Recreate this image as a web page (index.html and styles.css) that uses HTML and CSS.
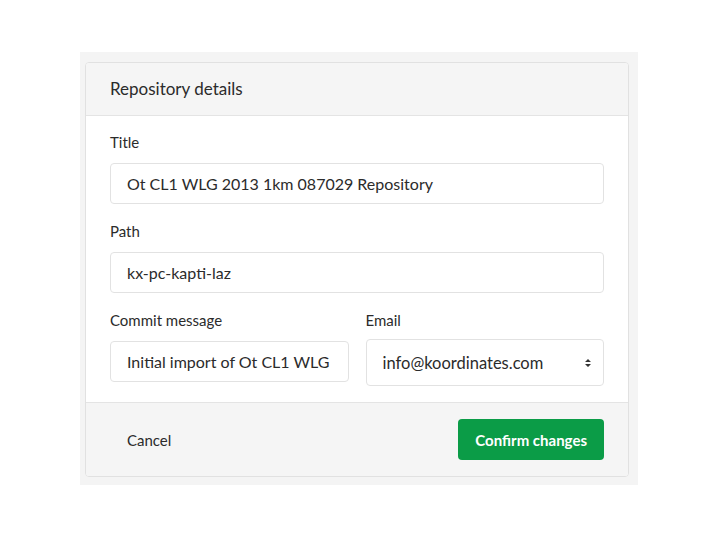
FILE: index.html
```html
<!DOCTYPE html>
<html lang="en">
<head>
    <meta charset="UTF-8">
    <title>Repository details</title>
    <link rel="stylesheet" href="styles.css">
</head>
<body>
    <div class="frame">
        <div class="card">
            <div class="card-header">Repository details</div>

            <div class="card-body">
                <div class="field">
                    <label for="title">Title</label>
                    <input type="text" id="title" value="Ot CL1 WLG 2013 1km 087029 Repository">
                </div>

                <div class="field">
                    <label for="path">Path</label>
                    <input type="text" id="path" value="kx-pc-kapti-laz">
                </div>

                <div class="field-row">
                    <div class="field">
                        <label for="message">Commit message</label>
                        <input type="text" id="message" value="Initial import of Ot CL1 WLG 2013 1km 087029">
                    </div>
                    <div class="field">
                        <label for="email">Email</label>
                        <div class="select-wrap">
                            <select id="email">
                                <option>info@koordinates.com</option>
                            </select>
                            <svg class="select-arrow" width="8" height="10" viewBox="0 0 8 10">
                                <path d="M4 1 L7 4 H1 Z M4 9 L7 6 H1 Z" fill="#333"/>
                            </svg>
                        </div>
                    </div>
                </div>
            </div>

            <div class="card-footer">
                <button class="btn-cancel">Cancel</button>
                <button class="btn-confirm">Confirm changes</button>
            </div>
        </div>
    </div>
</body>
</html>
```

FILE: styles.css
```css
body {
    margin: 0;
    padding: 52px 0 0 80px;
    background-color: white;
    font-family: Lato, "Open Sans", sans-serif;
    color: #2b2b2b;
}
.frame {
    width: 558px;
    box-sizing: border-box;
    padding: 10px 9px 8px 5px;
    background-color: #f4f4f4;
}
.card {
    background-color: white;
    border: 1px solid #e1e1e1;
    border-radius: 4px;
    overflow: hidden;
}
.card-header {
    height: 52px;
    line-height: 52px;
    padding: 0 24px;
    background-color: #f5f5f5;
    border-bottom: 1px solid #e4e4e4;
    font-size: 17px;
}
.card-body {
    padding: 16px 24px 16px;
}
.field {
    margin-bottom: 17px;
}
.field label {
    display: block;
    font-size: 15px;
    line-height: 20px;
    margin-bottom: 11px;
}
.field input {
    display: block;
    width: 100%;
    height: 41px;
    box-sizing: border-box;
    padding: 0 16px;
    border: 1px solid #e2e2e2;
    border-radius: 4px;
    font-family: inherit;
    font-size: 16px;
    color: #2b2b2b;
}
.field-row {
    display: grid;
    grid-template-columns: 1fr 1fr;
    gap: 17px;
}
.field-row .field {
    margin-bottom: 0;
}
.select-wrap {
    position: relative;
    margin-top: -2px;
}
.select-wrap select {
    display: block;
    width: 100%;
    height: 47px;
    padding: 0 16px;
    border: 1px solid #e2e2e2;
    border-radius: 4px;
    background-color: white;
    font-family: inherit;
    font-size: 16.5px;
    color: #2b2b2b;
    appearance: none;
}
.select-arrow {
    position: absolute;
    right: 12px;
    top: 19px;
}
.card-footer {
    display: flex;
    justify-content: space-between;
    align-items: center;
    height: 73px;
    padding: 0 24px;
    background-color: #f5f5f5;
    border-top: 1px solid #e4e4e4;
}
.btn-cancel {
    background: none;
    border: none;
    padding: 0 17px;
    font-family: inherit;
    font-size: 15px;
    color: #2b2b2b;
}
.btn-confirm {
    height: 41px;
    padding: 0 17px;
    background-color: #0b9c47;
    color: white;
    border: none;
    border-radius: 4px;
    font-family: inherit;
    font-size: 15px;
    font-weight: bold;
}
```
